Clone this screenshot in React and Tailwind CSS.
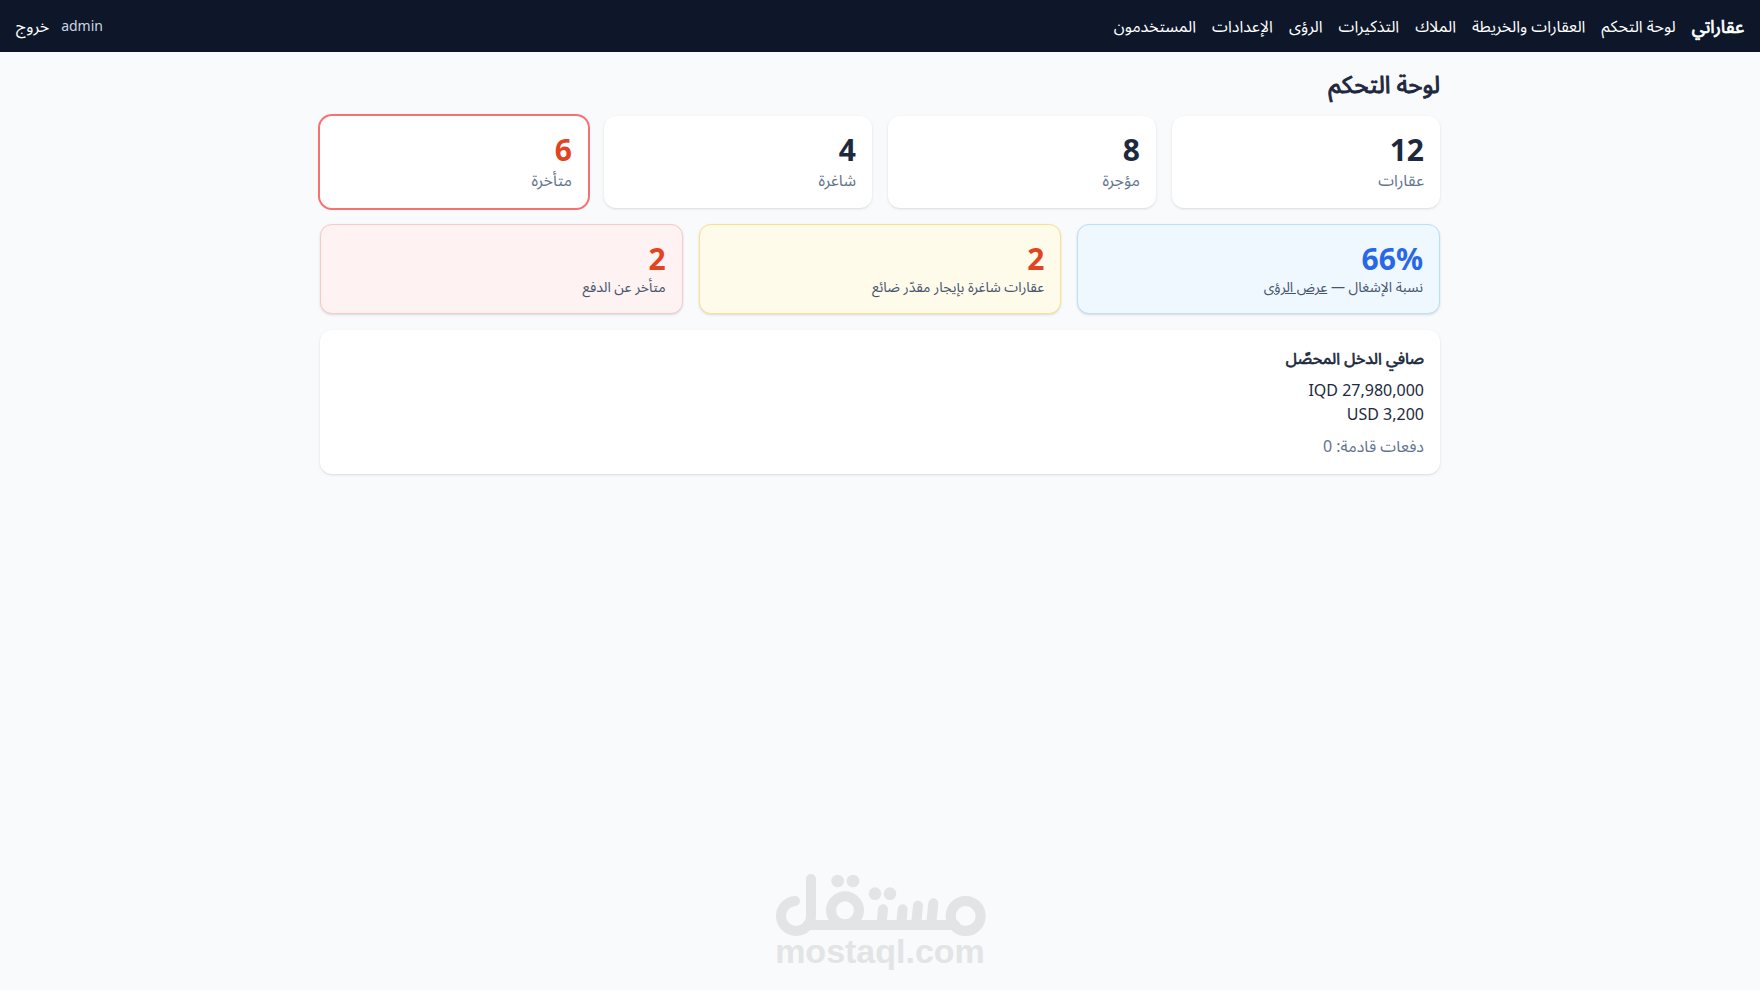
const NAV_LINKS = [
  'لوحة التحكم',
  'العقارات والخريطة',
  'الملاك',
  'التذكيرات',
  'الرؤى',
  'الإعدادات',
  'المستخدمون',
]

const STATS = [
  { label: 'عقارات', value: 12 },
  { label: 'مؤجرة', value: 8 },
  { label: 'شاغرة', value: 4 },
  { label: 'متأخرة', value: 6, alert: true },
]

const INCOME = ['IQD 27,980,000', 'USD 3,200']

// Arabic headings: regular letterforms thickened by a stroke, so they stay compact.
const HEADING = 'font-normal [-webkit-text-stroke:0.04em_currentColor]'

export default function App() {
  return (
    <div
      dir="rtl"
      className="flex min-h-screen flex-col bg-[#f9fafc] font-['Noto_Sans','Noto_Sans_Arabic',sans-serif] text-slate-800"
    >
      <Header />
      <main className="mx-auto w-full max-w-6xl p-4">
        <h1 className={`mb-4 text-2xl ${HEADING}`}>لوحة التحكم</h1>

        <div className="mb-4 grid grid-cols-4 gap-4">
          {STATS.map((s) => (
            <StatCard key={s.label} {...s} />
          ))}
        </div>

        <div className="mb-4 grid grid-cols-3 gap-4">
          <div className="rounded-xl border border-[#b9dffa] bg-[#eff7ff] p-4 shadow-sm">
            <div className="text-3xl font-bold text-[#2868e8]">
              <bdi dir="ltr">66%</bdi>
            </div>
            <div className="text-sm text-slate-600">
              نسبة الإشغال —{' '}
              <a href="#insights" className="underline">
                عرض الرؤى
              </a>
            </div>
          </div>
          <div className="rounded-xl border border-[#fbe08a] bg-[#fffbeb] p-4 shadow-sm">
            <div className="text-3xl font-bold text-[#e04420]">2</div>
            <div className="text-sm text-slate-600">عقارات شاغرة بإيجار مقدّر ضائع</div>
          </div>
          <div className="rounded-xl border border-[#fac8c8] bg-[#fef2f2] p-4 shadow-sm">
            <div className="text-3xl font-bold text-[#e04420]">2</div>
            <div className="text-sm text-slate-600">متأخر عن الدفع</div>
          </div>
        </div>

        <section className="rounded-xl bg-white p-4 shadow-sm">
          <h2 className={`mb-2 ${HEADING}`}>صافي الدخل المحصّل</h2>
          {INCOME.map((amount) => (
            <div key={amount}>
              <bdi dir="ltr">{amount}</bdi>
            </div>
          ))}
          <div className="mt-2 text-slate-500">دفعات قادمة: 0</div>
        </section>
      </main>
      <Brand />
    </div>
  )
}

function Header() {
  return (
    <header className="flex items-center justify-between bg-[#0d1729] px-4 py-3 text-white">
      <nav className="flex items-center gap-4">
        <span className={`text-lg ${HEADING}`}>عقاراتي</span>
        {NAV_LINKS.map((label) => (
          <a key={label} href="#" className="hover:underline">
            {label}
          </a>
        ))}
      </nav>
      <div className="flex items-center gap-3">
        <span className="text-sm text-slate-300">admin</span>
        <button type="button" className="hover:underline">
          خروج
        </button>
      </div>
    </header>
  )
}

function StatCard({ label, value, alert }) {
  return (
    <div className={`rounded-xl bg-white p-4 shadow-sm ${alert ? 'ring-2 ring-[#f87171]' : ''}`}>
      <div className={`text-3xl font-bold ${alert ? 'text-[#e04420]' : ''}`}>{value}</div>
      <div className="text-slate-500">{label}</div>
    </div>
  )
}

function Brand() {
  return (
    <footer className="mt-auto flex flex-col items-center pb-6 text-[#e3e4e6]">
      <svg
        viewBox="72 68 633 187"
        className="w-[211px]"
        fill="none"
        stroke="currentColor"
        strokeWidth="30"
        strokeLinecap="round"
        role="img"
        aria-label="مستقل"
      >
        <circle cx="644" cy="194" r="45" />
        <path d="M612 221H170" />
        <path d="M547 156l-6 56M501 163l-5 50M455 174l-4 40M396 174l-4 40" />
        <circle cx="282" cy="177" r="42" />
        <path d="M132 149A45 45 0 1 0 180 194V83" />
        <g fill="currentColor" stroke="none">
          <circle cx="372" cy="127" r="19" />
          <circle cx="417" cy="127" r="19" />
          <circle cx="260" cy="89" r="19" />
          <circle cx="306" cy="89" r="19" />
        </g>
      </svg>
      <span
        dir="ltr"
        className="font-['Liberation_Sans',Arial,sans-serif] text-[34px] leading-[30px] font-bold"
      >
        mostaql.com
      </span>
    </footer>
  )
}
